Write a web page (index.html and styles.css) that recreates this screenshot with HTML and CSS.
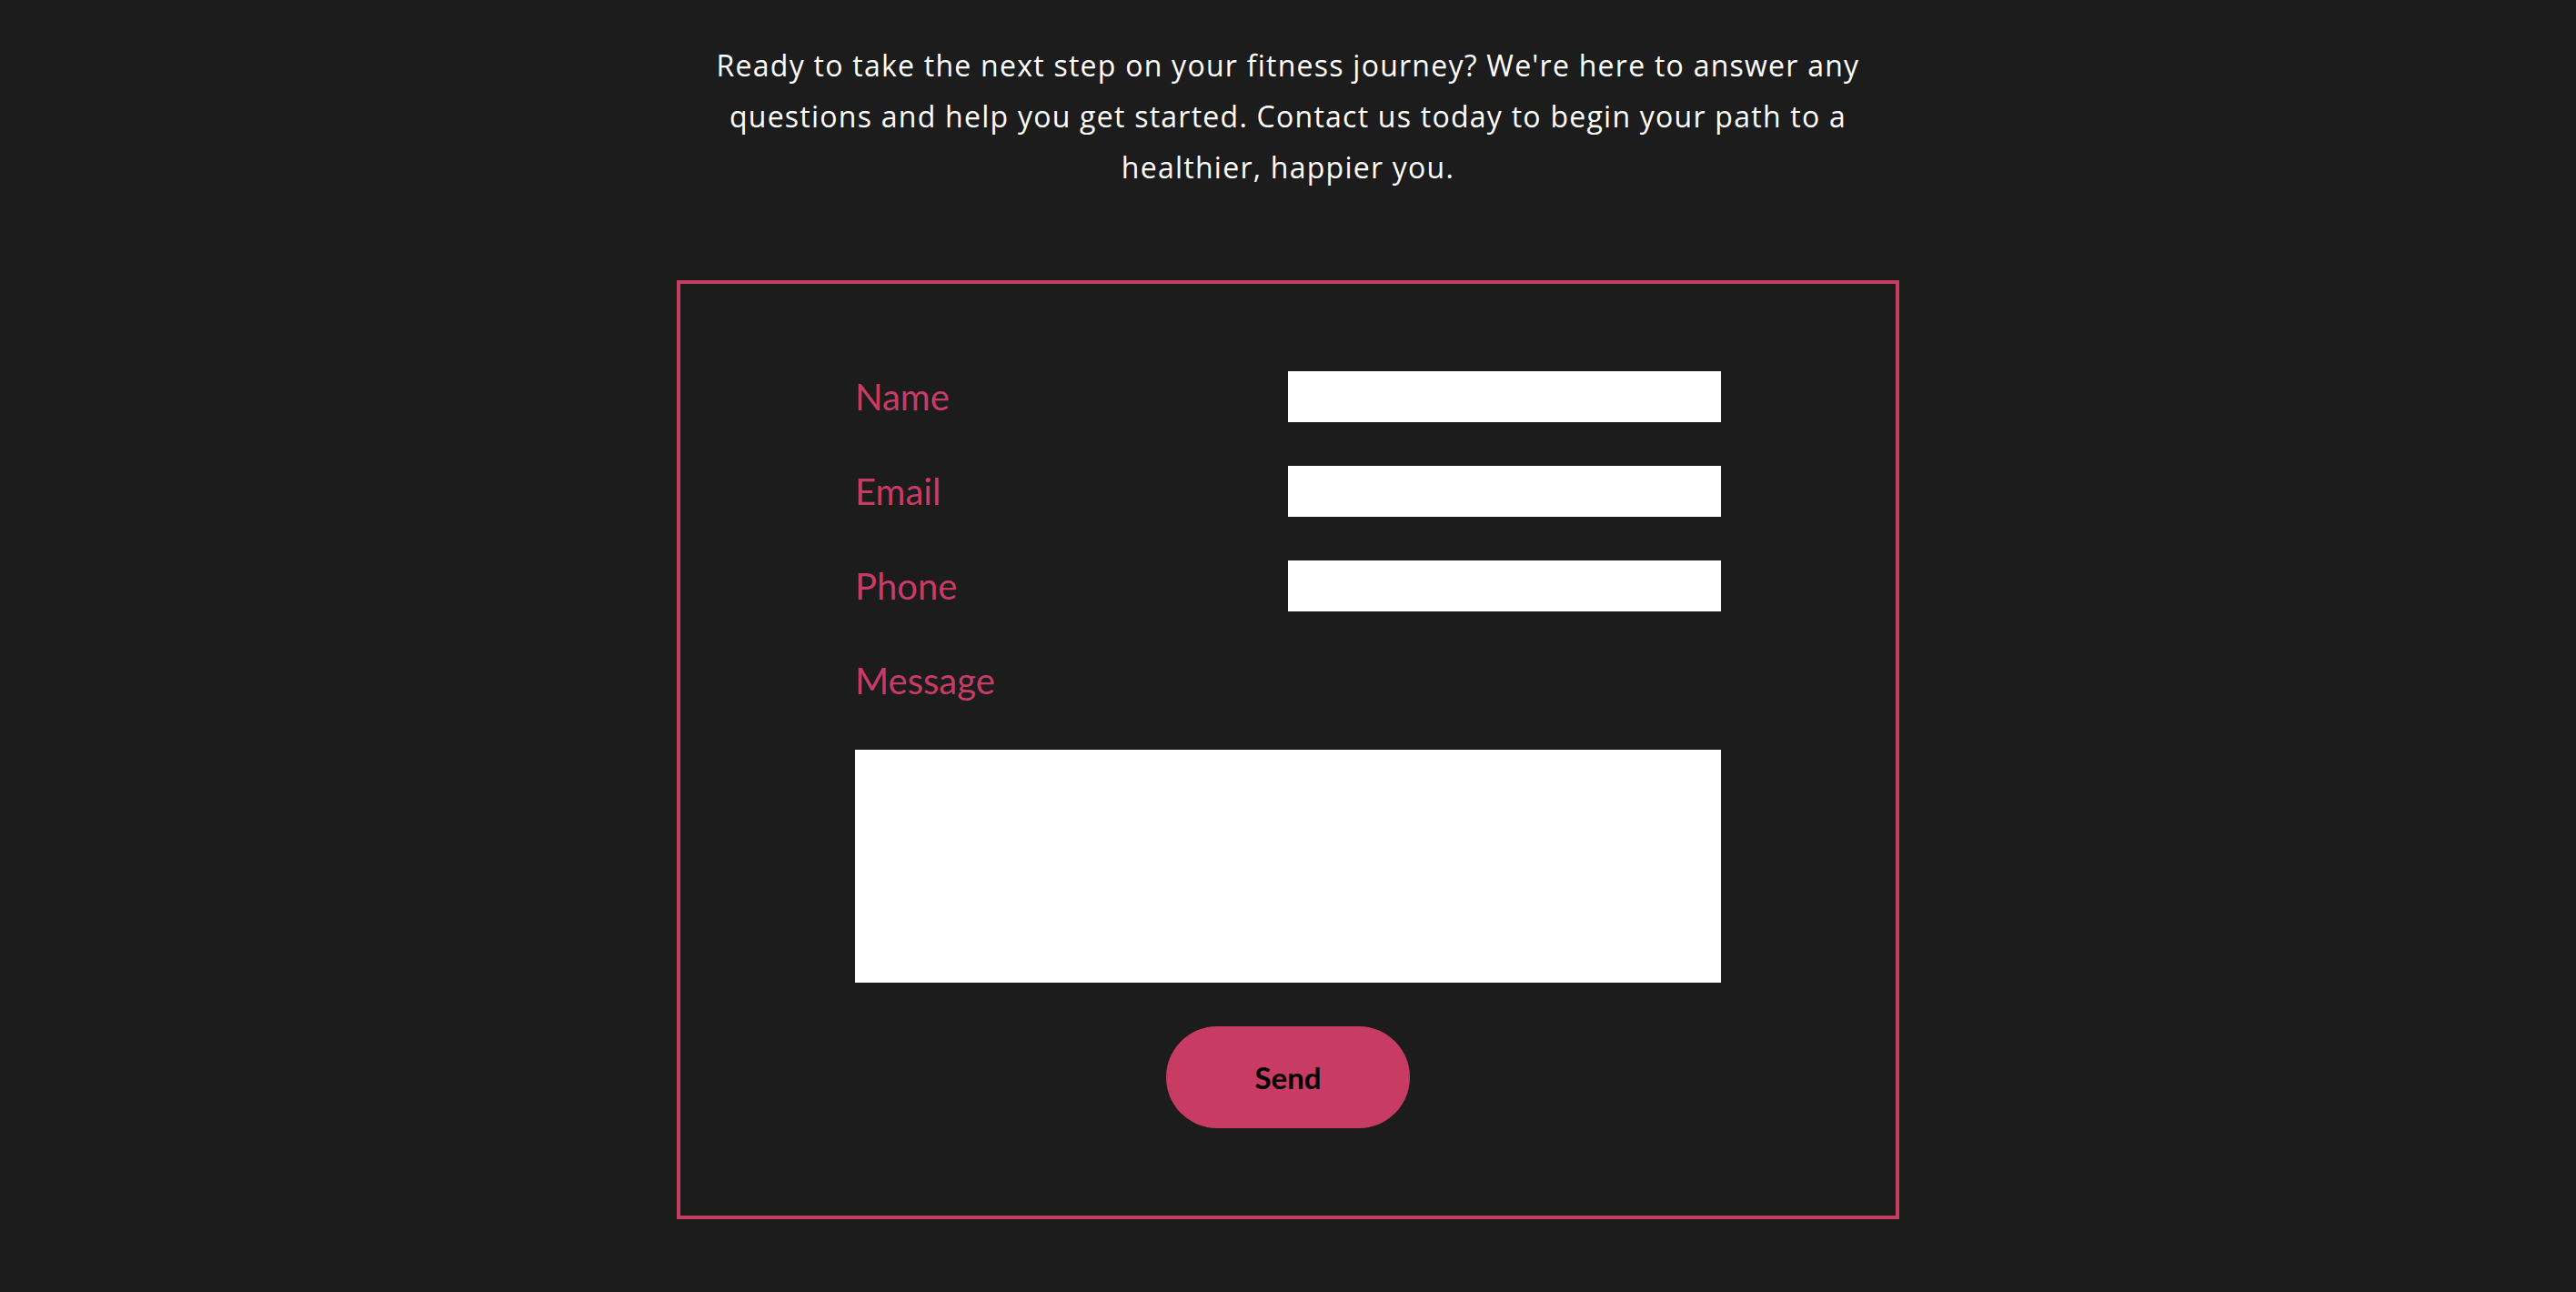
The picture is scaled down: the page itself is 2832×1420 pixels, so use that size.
FILE: index.html
```html
<!DOCTYPE html>
<html lang="en">
<head>
<meta charset="utf-8">
<title>Contact</title>
<link rel="stylesheet" href="styles.css">
</head>
<body>
<main class="contact">
  <p class="intro">Ready to take the next step on your fitness journey? We're here to answer any<br>questions and help you get started. Contact us today to begin your path to a<br>healthier, happier you.</p>
  <form class="contact-form">
    <div class="field-row">
      <label class="field-label" for="name">Name</label>
      <input class="field-input" id="name" type="text">
    </div>
    <div class="field-row">
      <label class="field-label" for="email">Email</label>
      <input class="field-input" id="email" type="email">
    </div>
    <div class="field-row">
      <label class="field-label" for="phone">Phone</label>
      <input class="field-input" id="phone" type="tel">
    </div>
    <div class="field-row">
      <label class="field-label" for="message">Message</label>
    </div>
    <textarea class="field-textarea" id="message"></textarea>
    <div class="actions">
      <button class="send-btn" type="button">Send</button>
    </div>
  </form>
</main>
</body>
</html>
```
FILE: styles.css
```css
html, body {
  margin: 0;
  padding: 0;
  background: #1c1c1c;
}

body {
  font-family: Lato, "Noto Sans", sans-serif;
  color: #ffffff;
}

.contact {
  display: flex;
  flex-direction: column;
  align-items: center;
  padding-top: 44px;
}

.intro {
  margin: 0;
  font-family: "Open Sans", Lato, sans-serif;
  font-size: 32px;
  font-weight: 500;
  letter-spacing: 1.25px;
  line-height: 56px;
  text-align: center;
  color: #ffffff;
}

.contact-form {
  margin-top: 96px;
  width: 952px;
  padding: 96px 192px;
  border: 4px solid #c83b65;
  display: flex;
  flex-direction: column;
}

.field-row {
  display: grid;
  grid-template-columns: 476px 476px;
  height: 56px;
  align-items: center;
  margin-bottom: 48px;
}

.field-label {
  color: #c83b65;
  font-size: 40px;
  line-height: 56px;
}

.field-input {
  box-sizing: border-box;
  width: 476px;
  height: 56px;
  border: none;
  margin: 0;
  padding: 0 12px;
  background: #ffffff;
  font-family: inherit;
  font-size: 28px;
}

.field-textarea {
  box-sizing: border-box;
  display: block;
  width: 952px;
  height: 256px;
  border: none;
  margin: 0;
  padding: 12px;
  background: #ffffff;
  resize: none;
  font-family: inherit;
  font-size: 28px;
}

.actions {
  display: flex;
  justify-content: center;
  margin-top: 48px;
}

.send-btn {
  width: 268px;
  height: 112px;
  border: none;
  border-radius: 56px;
  background: #c83b65;
  color: #000000;
  font-family: inherit;
  font-size: 33px;
  font-weight: 700;
  cursor: pointer;
}
```
